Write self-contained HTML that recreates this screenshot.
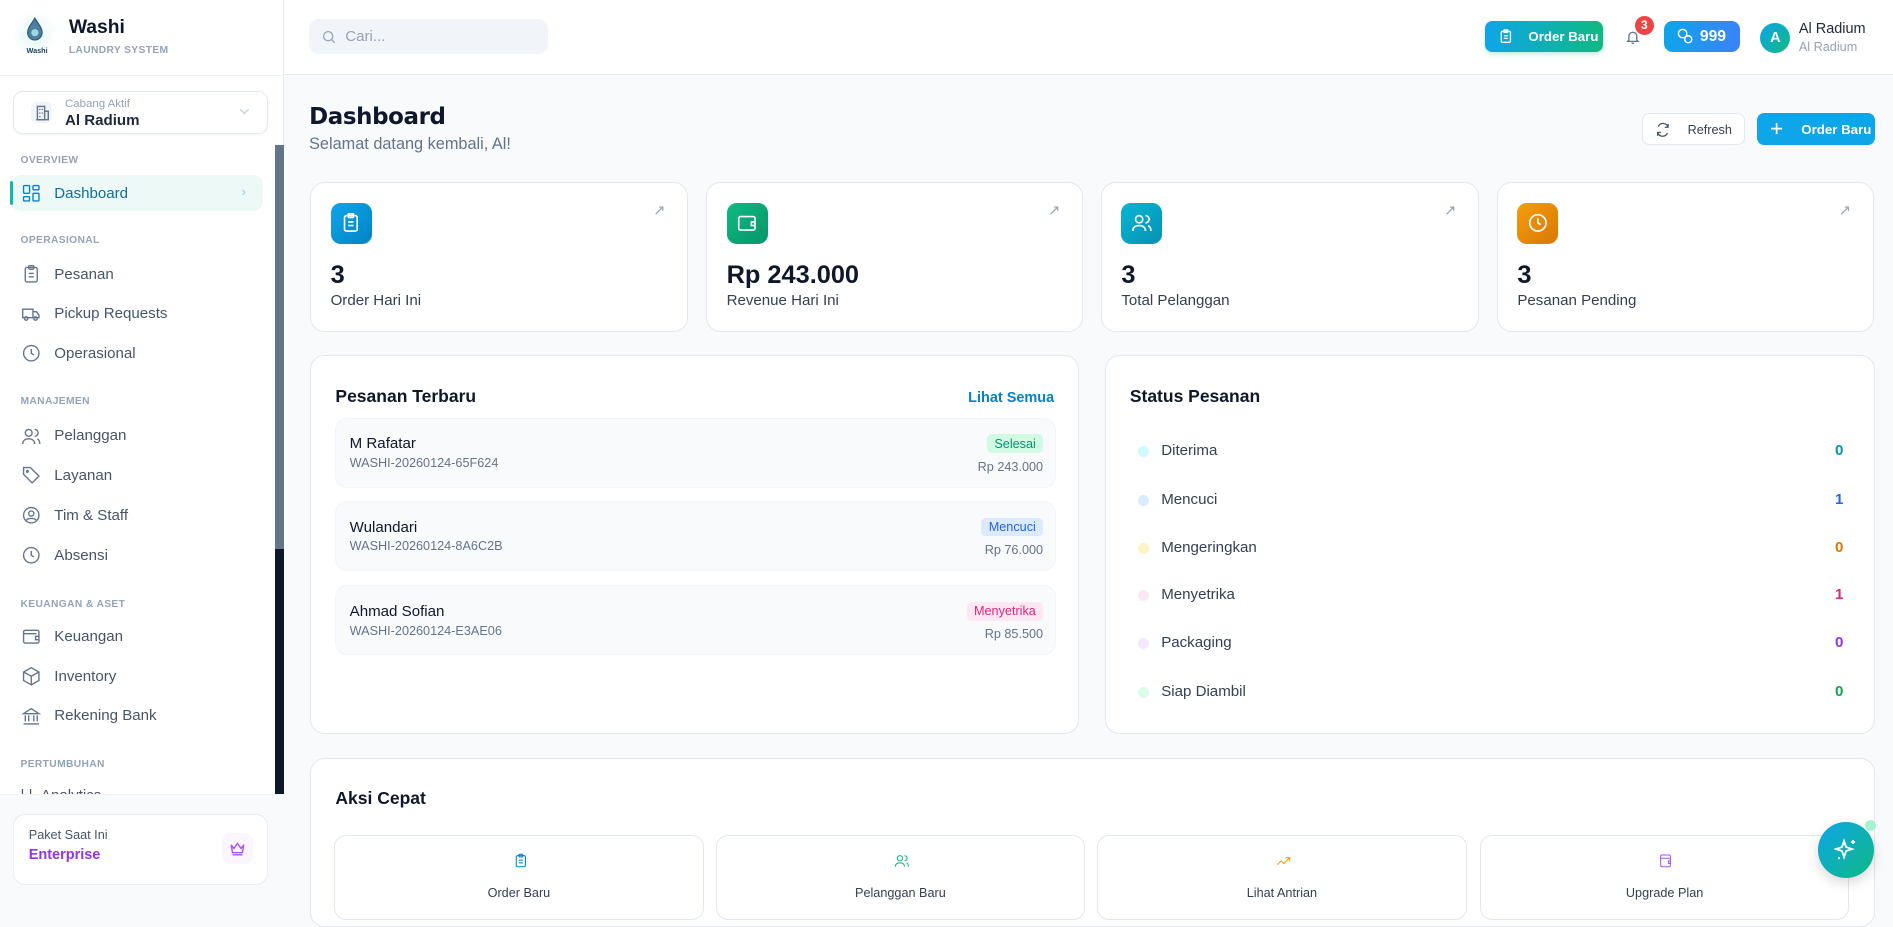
<!DOCTYPE html>
<html><head><meta charset="utf-8"><style>
*{box-sizing:border-box;margin:0;padding:0;white-space:nowrap}
html{zoom:1.2073}
body{width:1568px;height:744px;overflow:hidden;background:#f8fafc;font-family:"Liberation Sans",sans-serif;color:#0f172a;position:relative}
.a{position:absolute}
.sb{left:0;top:0;width:235px;height:744px;background:#fff;border-right:1px solid #e2e8f0}
.sec{position:absolute;left:17px;font-size:8.5px;font-weight:bold;color:#94a3b8;letter-spacing:.3px}
.it{position:absolute;left:17px;font-size:12.5px;color:#475569;display:flex;align-items:center;gap:11px;height:20px}
.it svg{width:17px;height:17px;stroke:#64748b;fill:none;stroke-width:1.6}
.card{position:absolute;background:#fff;border:1px solid #e2e8f0;border-radius:12px}
.ic{position:absolute;left:16px;top:16px;width:34px;height:34px;border-radius:8px;display:flex;align-items:center;justify-content:center}
.ic svg{width:18px;height:18px;stroke:#fff;fill:none;stroke-width:1.8}
.num{position:absolute;left:16px;top:64px;font-size:21px;font-weight:bold}
.lbl{position:absolute;left:16px;top:90px;font-size:12.5px;color:#334155}
.arr{position:absolute;right:18px;top:16px;color:#94a3b8;font-size:12px}
.ord{position:absolute;left:20px;width:597px;height:58px;background:#f8fafc;border:1px solid #f1f5f9;border-radius:10px}
.ord .n{position:absolute;left:11px;top:14px;font-size:12.5px;color:#0f172a}
.ord .c{position:absolute;left:11px;top:31px;font-size:10.5px;color:#64748b}
.ord .b{position:absolute;right:10px;top:13px;font-size:10.5px;padding:2px 6px;border-radius:4px}
.ord .p{position:absolute;right:10px;top:34px;font-size:10.5px;color:#64748b}
.st{position:absolute;left:27px;width:584px;font-size:12.5px;color:#334155;height:18px;line-height:18px}
.st i{position:absolute;left:0;top:5px;width:9px;height:9px;border-radius:50%}
.st span{position:absolute;left:19px}
.st b{position:absolute;right:0;font-size:12.5px}
.qa{position:absolute;top:63px;height:70px;width:306px;border:1px solid #e2e8f0;border-radius:10px;background:#fff;text-align:center}
.qa svg{position:absolute;left:147px;top:14px;width:13px;height:13px;fill:none;stroke-width:1.6}
.qa div{position:absolute;top:41px;width:100%;font-size:10.5px;color:#334155}
</style></head><body>
<div class="a sb">
  <div class="a" style="left:10px;top:9px;width:38px;height:38px;border-radius:50%;background:radial-gradient(#e0f5f4,#fff 70%)"></div>
  <svg class="a" style="left:20px;top:14px" width="18" height="22" viewBox="0 0 18 22"><path d="M9 1C6 6 3 9 3 13a6 6 0 0 0 12 0c0-4-3-7-6-12z" fill="#4f7fa0" stroke="#2c5d7c"/><circle cx="9" cy="13" r="3" fill="#9fd6e0"/></svg>
  <div class="a" style="left:22px;top:38px;font-size:6px;font-weight:bold;color:#1e3a5f">Washi</div>
  <div class="a" style="left:57px;top:14px;font-size:16px;font-weight:bold">Washi</div>
  <div class="a" style="left:57px;top:37px;font-size:8.5px;font-weight:bold;color:#94a3b8;letter-spacing:.3px">LAUNDRY SYSTEM</div>
  <div class="a" style="left:0;top:62px;width:235px;border-top:1px solid #eef2f6"></div>
  <div class="a" style="left:11px;top:75px;width:211px;height:36px;border:1px solid #e2e8f0;border-radius:8px;box-shadow:0 1px 2px rgba(0,0,0,.04)">
    <div class="a" style="left:14px;top:9px;width:17px;height:17px;border-radius:5px;background:#f1f5f9"></div>
    <svg class="a" style="left:17px;top:10px" width="12" height="14" viewBox="0 0 12 14" fill="none" stroke="#64748b" stroke-width="1.2"><rect x="2" y="2" width="6" height="11"/><path d="M8 6h3v7H1M4 4v1M4 7v1M4 10v1M6 4v1M6 7v1"/></svg>
    <div class="a" style="left:42px;top:5px;font-size:9.5px;color:#94a3b8">Cabang Aktif</div>
    <div class="a" style="left:42px;top:17px;font-size:12.5px;font-weight:bold;color:#1e293b">Al Radium</div>
    <svg class="a" style="left:186px;top:14px" width="9" height="6" viewBox="0 0 9 6" fill="none" stroke="#cbd5e1" stroke-width="1.2"><path d="M1 1l3.5 3.5L8 1"/></svg>
  </div>
  <div class="sec" style="top:128px">OVERVIEW</div>
  <div class="a" style="left:9px;top:145px;width:209px;height:30px;background:#ecf9f7;border-radius:8px"></div>
  <div class="a" style="left:8px;top:150px;width:3px;height:20px;background:#14b8a6;border-radius:2px"></div>
  <div class="it" style="top:150px;color:#0e6f9a"><svg viewBox="0 0 24 24" style="stroke:#0284c7"><rect x="3" y="3" width="7" height="9" rx="1"/><rect x="14" y="3" width="7" height="5" rx="1"/><rect x="14" y="12" width="7" height="9" rx="1"/><rect x="3" y="16" width="7" height="5" rx="1"/></svg>Dashboard</div>
  <div class="a" style="left:200px;top:152px;font-size:11px;color:#7dd3fc">&#8250;</div>
  <div class="sec" style="top:195px">OPERASIONAL</div>
  <div class="it" style="top:217px"><svg viewBox="0 0 24 24"><rect x="5" y="4" width="14" height="17" rx="2"/><rect x="9" y="2" width="6" height="4" rx="1"/><path d="M9 11h6M9 15h6"/></svg>Pesanan</div>
  <div class="it" style="top:250px"><svg viewBox="0 0 24 24"><path d="M2 6h12v10H2zM14 9h4l3 4v3h-7"/><circle cx="6" cy="17" r="2"/><circle cx="17" cy="17" r="2"/></svg>Pickup Requests</div>
  <div class="it" style="top:283px"><svg viewBox="0 0 24 24"><circle cx="12" cy="12" r="9"/><path d="M12 7v5l3 2"/></svg>Operasional</div>
  <div class="sec" style="top:328px">MANAJEMEN</div>
  <div class="it" style="top:351px"><svg viewBox="0 0 24 24"><circle cx="9" cy="8" r="4"/><path d="M2 21c0-4 3-6 7-6s7 2 7 6M16 4a4 4 0 0 1 0 8M19 15c2 1 3 3 3 6"/></svg>Pelanggan</div>
  <div class="it" style="top:384px"><svg viewBox="0 0 24 24"><path d="M3 3h8l10 10-8 8L3 11z"/><circle cx="7.5" cy="7.5" r="1"/></svg>Layanan</div>
  <div class="it" style="top:417px"><svg viewBox="0 0 24 24"><circle cx="12" cy="12" r="9"/><circle cx="12" cy="10" r="3"/><path d="M6 18c2-3 10-3 12 0"/></svg>Tim &amp; Staff</div>
  <div class="it" style="top:450px"><svg viewBox="0 0 24 24"><circle cx="12" cy="12" r="9"/><path d="M12 7v5l3 2"/></svg>Absensi</div>
  <div class="sec" style="top:496px">KEUANGAN &amp; ASET</div>
  <div class="it" style="top:517px"><svg viewBox="0 0 24 24"><rect x="3" y="5" width="18" height="15" rx="2"/><path d="M3 9h15M21 12h-4v4h4"/></svg>Keuangan</div>
  <div class="it" style="top:550px"><svg viewBox="0 0 24 24"><path d="M12 2l9 5v10l-9 5-9-5V7zM3 7l9 5 9-5M12 12v10"/></svg>Inventory</div>
  <div class="it" style="top:583px"><svg viewBox="0 0 24 24"><path d="M3 9l9-6 9 6zM5 11v7M9 11v7M15 11v7M19 11v7M3 21h18"/></svg>Rekening Bank</div>
  <div class="sec" style="top:629px">PERTUMBUHAN</div>
  <div class="it" style="top:652px;height:6px;overflow:hidden;align-items:flex-start"><span>| |&nbsp;&nbsp;Analytics</span></div>
  <div class="a" style="left:228px;top:120px;width:7px;height:538px;background:#0f172a"></div>
  <div class="a" style="left:228px;top:120px;width:7px;height:335px;background:#64748b"></div>
  <div class="a" style="left:0;top:658px;width:235px;height:86px;background:#f8fafc;border-top:1px solid #eef2f6"></div>
  <div class="a" style="left:11px;top:674px;width:211px;height:59px;background:#fff;border:1px solid #e8edf3;border-radius:10px">
    <div class="a" style="left:12px;top:11px;font-size:10.5px;color:#475569">Paket Saat Ini</div>
    <div class="a" style="left:12px;top:27px;font-size:12px;font-weight:bold;color:#9333ea">Enterprise</div>
    <div class="a" style="left:172px;top:15px;width:26px;height:26px;border-radius:7px;background:#faf5ff"></div>
    <svg class="a" style="left:178px;top:21px" width="14" height="14" viewBox="0 0 24 24" fill="none" stroke="#a855f7" stroke-width="2"><path d="M3 7l4 5 5-7 5 7 4-5-2 11H5zM5 21h14"/></svg>
  </div>
</div>
<!-- top bar -->
<div class="a" style="left:235px;top:0;width:1333px;height:62px;background:#fff;border-bottom:1px solid #e5e9ef">
  <div class="a" style="left:21px;top:16px;width:198px;height:29px;background:#f1f5f9;border-radius:8px">
    <svg class="a" style="left:10px;top:8px" width="13" height="13" viewBox="0 0 24 24" fill="none" stroke="#94a3b8" stroke-width="2"><circle cx="11" cy="11" r="7"/><path d="M16 16l5 5"/></svg>
    <div class="a" style="left:30px;top:7px;font-size:12.5px;color:#94a3b8">Cari...</div>
  </div>
  <div class="a" style="left:995px;top:17px;width:98px;height:26px;border-radius:6px;background:linear-gradient(90deg,#0ea5e9,#10b981);box-shadow:0 2px 4px rgba(16,185,129,.25)">
    <svg class="a" style="left:11px;top:6px" width="13" height="14" viewBox="0 0 24 24" fill="none" stroke="#fff" stroke-width="2"><rect x="5" y="4" width="14" height="17" rx="2"/><rect x="9" y="2" width="6" height="4" rx="1"/><path d="M9 11h6M9 15h6"/></svg>
    <div class="a" style="left:36px;top:7px;font-size:11px;font-weight:bold;color:#fff">Order Baru</div>
  </div>
  <svg class="a" style="left:1111px;top:24px" width="13" height="14" viewBox="0 0 24 24" fill="none" stroke="#64748b" stroke-width="2"><path d="M6 16V10a6 6 0 0 1 12 0v6l2 2H4zM10 21h4"/></svg>
  <div class="a" style="left:1119px;top:13px;width:16px;height:16px;border-radius:50%;background:#ef4444;color:#fff;font-size:10px;font-weight:bold;text-align:center;line-height:16px">3</div>
  <div class="a" style="left:1143px;top:17px;width:63px;height:26px;border-radius:7px;background:linear-gradient(90deg,#0ea5e9,#3b82f6)">
    <svg class="a" style="left:11px;top:6px" width="14" height="14" viewBox="0 0 24 24" fill="none" stroke="#fff" stroke-width="2"><circle cx="8" cy="8" r="6"/><circle cx="16" cy="16" r="5"/></svg>
    <div class="a" style="left:30px;top:6px;font-size:13px;font-weight:bold;color:#fff">999</div>
  </div>
  <div class="a" style="left:1223px;top:19px;width:25px;height:25px;border-radius:50%;background:linear-gradient(135deg,#0ea5e9,#10b981);color:#fff;font-size:12px;font-weight:bold;text-align:center;line-height:25px">A</div>
  <div class="a" style="left:1255px;top:17px;font-size:12px;color:#1e293b">Al Radium</div>
  <div class="a" style="left:1255px;top:33px;font-size:10.5px;color:#94a3b8">Al Radium</div>
</div>
<!-- header -->
<div class="a" style="left:256px;top:86px;font-size:19px;font-weight:bold;color:#0f172a;font-family:'DejaVu Sans',sans-serif;letter-spacing:-.3px">Dashboard</div>
<div class="a" style="left:256px;top:112px;font-size:13.5px;color:#64748b">Selamat datang kembali, Al!</div>
<div class="a" style="left:1360px;top:94px;width:85px;height:26px;border:1px solid #e2e8f0;border-radius:6px;background:#fff">
  <svg class="a" style="left:10px;top:6px" width="13" height="13" viewBox="0 0 24 24" fill="none" stroke="#475569" stroke-width="2"><path d="M20 8a8 8 0 0 0-15-1M4 16a8 8 0 0 0 15 1M20 3v5h-5M4 21v-5h5"/></svg>
  <div class="a" style="left:37px;top:7px;font-size:10.5px;color:#334155">Refresh</div>
</div>
<div class="a" style="left:1455px;top:94px;width:98px;height:26px;border-radius:6px;background:#0ea5e9">
  <svg class="a" style="left:11px;top:7px" width="11" height="11" viewBox="0 0 12 12" stroke="#fff" stroke-width="1.5"><path d="M6 1v10M1 6h10"/></svg>
  <div class="a" style="left:37px;top:7px;font-size:11px;font-weight:bold;color:#fff">Order Baru</div>
</div>
<!-- stat cards -->
<div class="card" style="left:257px;top:151px;width:313px;height:124px"><div class="ic" style="background:linear-gradient(135deg,#0ea5e9,#0284c7)"><svg viewBox="0 0 24 24"><rect x="5" y="4" width="14" height="17" rx="2"/><rect x="9" y="2" width="6" height="4" rx="1"/><path d="M9 11h6M9 15h6"/></svg></div><div class="arr">&#8599;</div><div class="num">3</div><div class="lbl">Order Hari Ini</div></div>
<div class="card" style="left:585px;top:151px;width:312px;height:124px"><div class="ic" style="background:linear-gradient(135deg,#10b981,#059669)"><svg viewBox="0 0 24 24"><rect x="3" y="5" width="18" height="15" rx="2"/><path d="M21 11h-4v4h4"/></svg></div><div class="arr">&#8599;</div><div class="num">Rp 243.000</div><div class="lbl">Revenue Hari Ini</div></div>
<div class="card" style="left:912px;top:151px;width:313px;height:124px"><div class="ic" style="background:linear-gradient(135deg,#06b6d4,#0891b2)"><svg viewBox="0 0 24 24"><circle cx="9" cy="8" r="4"/><path d="M2 21c0-4 3-6 7-6s7 2 7 6M16 4a4 4 0 0 1 0 8M19 15c2 1 3 3 3 6"/></svg></div><div class="arr">&#8599;</div><div class="num">3</div><div class="lbl">Total Pelanggan</div></div>
<div class="card" style="left:1240px;top:151px;width:312px;height:124px"><div class="ic" style="background:linear-gradient(135deg,#f59e0b,#d97706)"><svg viewBox="0 0 24 24"><circle cx="12" cy="12" r="9"/><path d="M12 7v5l3 2"/></svg></div><div class="arr">&#8599;</div><div class="num">3</div><div class="lbl">Pesanan Pending</div></div>
<!-- pesanan terbaru -->
<div class="card" style="left:257px;top:294px;width:637px;height:314px">
  <div class="a" style="left:20px;top:25px;font-size:14.5px;font-weight:bold;color:#0f172a">Pesanan Terbaru</div>
  <div class="a" style="right:20px;top:28px;font-size:12px;font-weight:bold;color:#0284c7">Lihat Semua</div>
  <div class="ord" style="top:51px"><div class="n">M Rafatar</div><div class="c">WASHI-20260124-65F624</div><div class="b" style="background:#d1fae5;color:#059669">Selesai</div><div class="p">Rp 243.000</div></div>
  <div class="ord" style="top:120px"><div class="n">Wulandari</div><div class="c">WASHI-20260124-8A6C2B</div><div class="b" style="background:#dbeafe;color:#2563eb">Mencuci</div><div class="p">Rp 76.000</div></div>
  <div class="ord" style="top:190px"><div class="n">Ahmad Sofian</div><div class="c">WASHI-20260124-E3AE06</div><div class="b" style="background:#fce7f3;color:#db2777">Menyetrika</div><div class="p">Rp 85.500</div></div>
</div>
<!-- status -->
<div class="card" style="left:915px;top:294px;width:638px;height:314px">
  <div class="a" style="left:20px;top:25px;font-size:14.5px;font-weight:bold;color:#0f172a">Status Pesanan</div>
  <div class="st" style="top:70px"><i style="background:#cffafe"></i><span>Diterima</span><b style="color:#0891b2">0</b></div>
  <div class="st" style="top:110px"><i style="background:#dbeafe"></i><span>Mencuci</span><b style="color:#2563eb">1</b></div>
  <div class="st" style="top:150px"><i style="background:#fef3c7"></i><span>Mengeringkan</span><b style="color:#d97706">0</b></div>
  <div class="st" style="top:189px"><i style="background:#fce7f3"></i><span>Menyetrika</span><b style="color:#db2777">1</b></div>
  <div class="st" style="top:229px"><i style="background:#f3e8ff"></i><span>Packaging</span><b style="color:#9333ea">0</b></div>
  <div class="st" style="top:269px"><i style="background:#dcfce7"></i><span>Siap Diambil</span><b style="color:#16a34a">0</b></div>
</div>
<!-- aksi cepat -->
<div class="card" style="left:257px;top:628px;width:1296px;height:140px">
  <div class="a" style="left:20px;top:24px;font-size:14.5px;font-weight:bold;color:#0f172a">Aksi Cepat</div>
  <div class="qa" style="left:19px"><svg viewBox="0 0 24 24" stroke="#0284c7"><rect x="5" y="4" width="14" height="17" rx="2"/><rect x="9" y="2" width="6" height="4" rx="1"/><path d="M9 11h6M9 15h6"/></svg><div>Order Baru</div></div>
  <div class="qa" style="left:335px"><svg viewBox="0 0 24 24" stroke="#10b981"><circle cx="9" cy="8" r="4"/><path d="M2 21c0-4 3-6 7-6s7 2 7 6M16 4a4 4 0 0 1 0 8M19 15c2 1 3 3 3 6"/></svg><div>Pelanggan Baru</div></div>
  <div class="qa" style="left:651px"><svg viewBox="0 0 24 24" stroke="#f59e0b"><path d="M2 18l6-6 4 4 9-9M15 7h6v6"/></svg><div>Lihat Antrian</div></div>
  <div class="qa" style="left:968px"><svg viewBox="0 0 24 24" stroke="#a855f7"><rect x="4" y="3" width="15" height="18" rx="2"/><path d="M4 8h14M19 12h-3v4h3"/></svg><div>Upgrade Plan</div></div>
</div>
<div class="a" style="left:1506px;top:681px;width:46px;height:46px;border-radius:50%;background:linear-gradient(135deg,#0ea5e9,#10b981);box-shadow:0 4px 10px rgba(0,0,0,.15)">
  <svg class="a" style="left:13px;top:13px" width="20" height="20" viewBox="0 0 24 24" fill="none" stroke="#fff" stroke-width="1.8"><path d="M10 3l2 6 6 2-6 2-2 6-2-6-6-2 6-2zM19 2v4M17 4h4M5 19v2"/></svg>
</div>
<div class="a" style="left:1545px;top:679px;width:9px;height:9px;border-radius:50%;background:#a7f3d0"></div>
</body></html>
